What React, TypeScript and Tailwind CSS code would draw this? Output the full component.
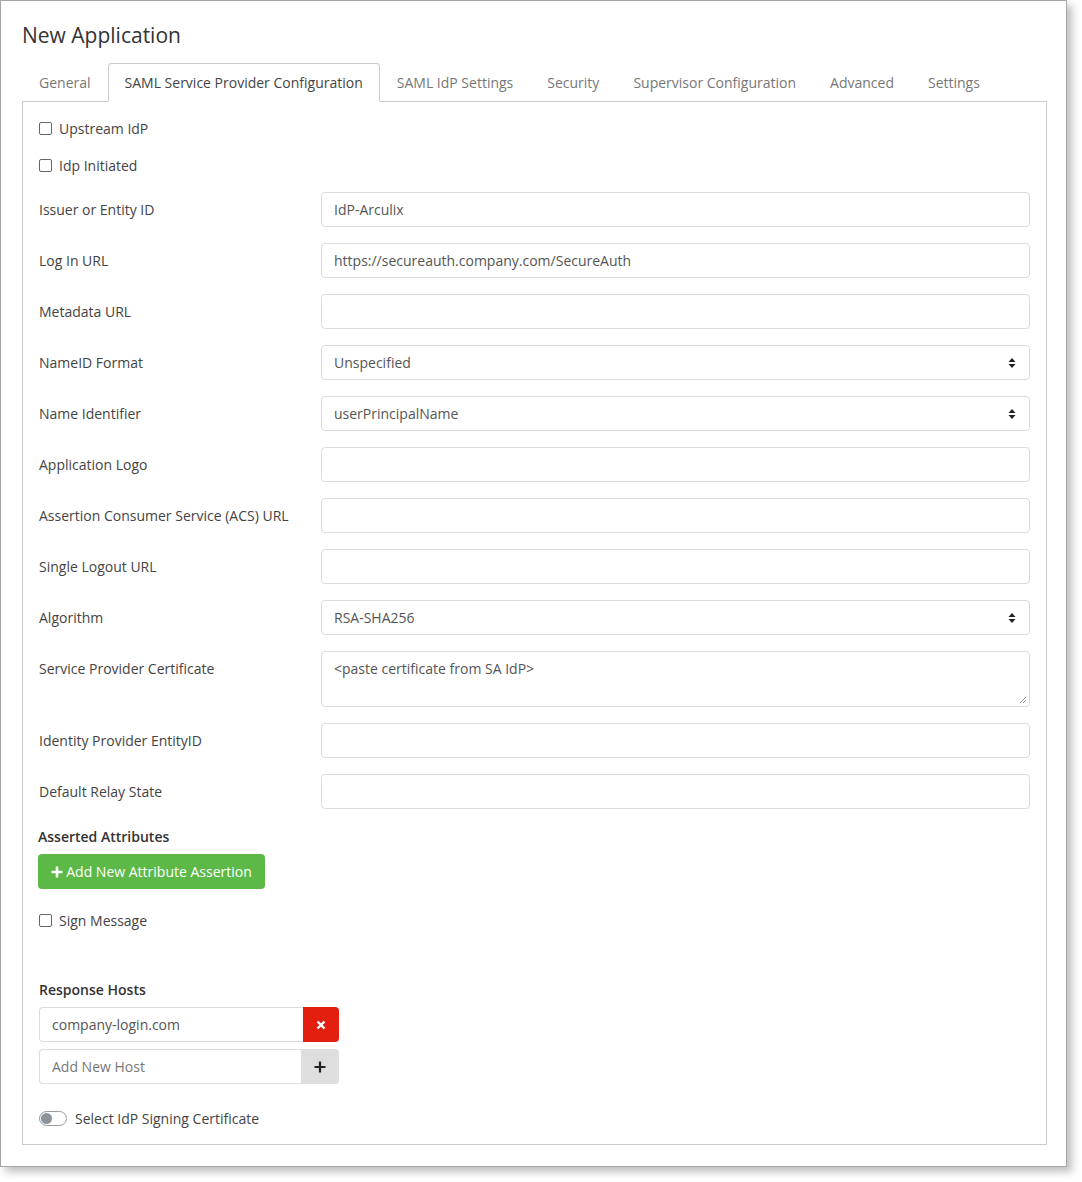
import React from "react";

const font = { fontFamily: '"Open Sans", "Noto Sans", sans-serif' };

const tabs = [
  "General",
  "SAML Service Provider Configuration",
  "SAML IdP Settings",
  "Security",
  "Supervisor Configuration",
  "Advanced",
  "Settings",
];

function SelectArrows() {
  return (
    <svg width="8" height="12" viewBox="0 0 8 12" className="absolute right-[13px] top-1/2 -translate-y-1/2">
      <path d="M4 1 L7.5 5 H0.5 Z" fill="#222" />
      <path d="M4 11 L7.5 7 H0.5 Z" fill="#222" />
    </svg>
  );
}

function Check({ label }: { label: string }) {
  return (
    <label className="flex items-center h-[37px] text-[14px] text-[#444]">
      <span className="w-[13px] h-[13px] border border-[#666] rounded-[2px] bg-white mr-[7px]" />
      {label}
    </label>
  );
}

type Row = { label: string; value?: string; kind?: "select" | "textarea" };

const rows: Row[] = [
  { label: "Issuer or Entity ID", value: "IdP-Arculix" },
  { label: "Log In URL", value: "https://secureauth.company.com/SecureAuth" },
  { label: "Metadata URL" },
  { label: "NameID Format", value: "Unspecified", kind: "select" },
  { label: "Name Identifier", value: "userPrincipalName", kind: "select" },
  { label: "Application Logo" },
  { label: "Assertion Consumer Service (ACS) URL" },
  { label: "Single Logout URL" },
  { label: "Algorithm", value: "RSA-SHA256", kind: "select" },
  { label: "Service Provider Certificate", value: "<paste certificate from SA IdP>", kind: "textarea" },
  { label: "Identity Provider EntityID" },
  { label: "Default Relay State" },
];

function FormRow({ row }: { row: Row }) {
  if (row.kind === "textarea") {
    return (
      <div className="flex mb-4">
        <div className="w-[282px] shrink-0 h-[35px] flex items-center text-[14px] text-[#444]">{row.label}</div>
        <div className="relative flex-1 h-[56px] border border-[#dcdcdc] rounded-[4px] px-3 pt-[7px] text-[14px] text-[#555] leading-[20px]">
          {row.value}
          <svg width="8" height="8" viewBox="0 0 8 8" className="absolute right-[2px] bottom-[2px]">
            <path d="M7 1 L1 7 M7 4 L4 7" stroke="#777" strokeWidth="0.8" />
          </svg>
        </div>
      </div>
    );
  }
  return (
    <div className="flex mb-4">
      <div className="w-[282px] shrink-0 h-[35px] flex items-center text-[14px] text-[#444]">{row.label}</div>
      <div className="relative flex-1 h-[35px] border border-[#dcdcdc] rounded-[4px] px-3 flex items-center text-[14px] text-[#555]">
        {row.value}
        {row.kind === "select" && <SelectArrows />}
      </div>
    </div>
  );
}

export default function App() {
  return (
    <div className="min-h-[1182px] bg-white" style={font}>
      <div className="w-[1067px] h-[1167px] border border-[#a6a6a6] bg-white shadow-[5px_5px_8px_rgba(0,0,0,0.25)] pl-[21px] pr-[19px] pt-[19px]">
        <h1 className="text-[21px] text-[#333] leading-[30px]">New Application</h1>
        <div className="flex mt-[13px] h-[39px] relative z-10">
          {tabs.map((t, i) => (
            <div
              key={t}
              className={
                i === 1
                  ? "px-4 flex items-center text-[14px] text-[#444] border border-[#ccc] border-b-white rounded-t-[4px] bg-white"
                  : "px-4 flex items-center text-[14px] text-[#777] border border-transparent"
              }
            >
              {t}
            </div>
          ))}
        </div>
        <div className="border border-[#ccc] -mt-px h-[1044px] px-4 pt-[8px]">
          <Check label="Upstream IdP" />
          <Check label="Idp Initiated" />
          <div className="mt-[8px]">
            {rows.map((r) => (
              <FormRow key={r.label} row={r} />
            ))}
          </div>
          <div className="text-[14px] font-semibold text-[#333] leading-[20px] mt-[18px] -ml-px">Asserted Attributes</div>
          <button className="mt-[7px] -ml-px h-[35px] w-[227px] rounded-[4px] bg-[#5cb947] text-white text-[14px] flex items-center justify-center gap-[3px]">
            <svg width="12" height="12" viewBox="0 0 12 12">
              <path d="M6 0.5 V11.5 M0.5 6 H11.5" stroke="white" strokeWidth="2.6" />
            </svg>
            Add New Attribute Assertion
          </button>
          <div className="mt-[13px]">
            <Check label="Sign Message" />
          </div>
          <div className="mt-[41px] text-[14px] font-semibold text-[#333] leading-[20px]">Response Hosts</div>
          <div className="mt-[7px] w-[300px] h-[35px] flex">
            <div className="flex-1 border border-[#dcdcdc] border-r-0 rounded-l-[4px] px-3 flex items-center text-[14px] text-[#555]">
              company-login.com
            </div>
            <div className="w-[36px] bg-[#e3200f] rounded-r-[4px] flex items-center justify-center">
              <svg width="10" height="10" viewBox="0 0 10 10">
                <path d="M1.5 1.5 L8.5 8.5 M8.5 1.5 L1.5 8.5" stroke="white" strokeWidth="2.4" />
              </svg>
            </div>
          </div>
          <div className="mt-[7px] w-[300px] h-[35px] flex">
            <div className="flex-1 border border-[#dcdcdc] border-r-0 rounded-l-[4px] px-3 flex items-center text-[14px] text-[#777]">
              Add New Host
            </div>
            <div className="w-[38px] bg-[#dedede] rounded-r-[4px] flex items-center justify-center">
              <svg width="12" height="12" viewBox="0 0 12 12">
                <path d="M6 0.5 V11.5 M0.5 6 H11.5" stroke="#222" strokeWidth="2.2" />
              </svg>
            </div>
          </div>
          <div className="mt-[24px] flex items-center gap-[8px] text-[14px] text-[#444]">
            <div className="w-[28px] h-[15px] rounded-full border border-[#999] flex items-center px-[1px]">
              <div className="w-[11px] h-[11px] rounded-full bg-[#8c939a]" />
            </div>
            Select IdP Signing Certificate
          </div>
        </div>
      </div>
    </div>
  );
}
